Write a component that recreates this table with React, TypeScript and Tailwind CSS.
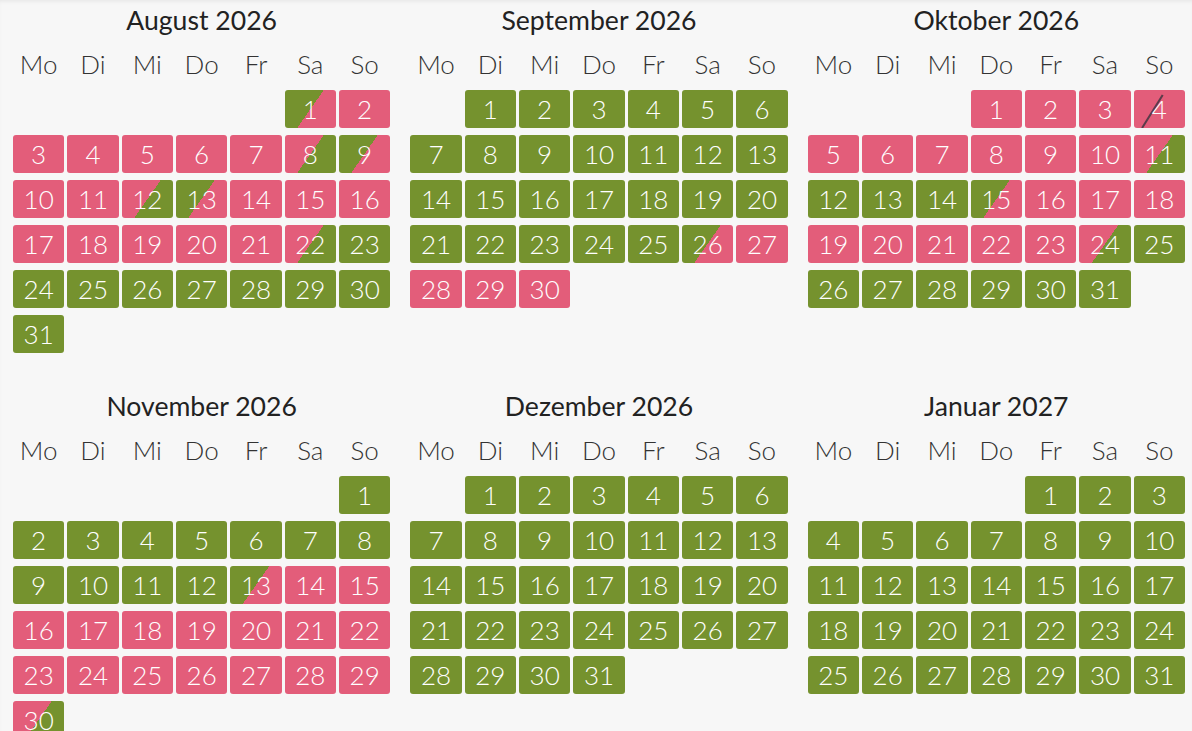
import React from "react";

// g = frei, p = belegt, a = Anreise (frei -> belegt), d = Abreise (belegt -> frei), x = belegt mit Wechselstrich
type DayState = "g" | "p" | "a" | "d" | "x";

interface MonthData {
  name: string;
  offset: number;
  days: string;
}

const months: MonthData[] = [
  { name: "August 2026", offset: 5, days: "a" + "pppppp" + "d" + "a" + "pp" + "d" + "a" + "pppppppp" + "d" + "ggggggggg" },
  { name: "September 2026", offset: 1, days: "g".repeat(25) + "a" + "pppp" },
  { name: "Oktober 2026", offset: 3, days: "ppp" + "x" + "pppppp" + "d" + "ggg" + "a" + "pppppppp" + "d" + "ggggggg" },
  { name: "November 2026", offset: 6, days: "g".repeat(12) + "a" + "p".repeat(16) + "d" },
  { name: "Dezember 2026", offset: 1, days: "g".repeat(31) },
  { name: "Januar 2027", offset: 4, days: "g".repeat(31) },
];

const weekdays = ["Mo", "Di", "Mi", "Do", "Fr", "Sa", "So"];

const stateClasses: Record<DayState, string> = {
  g: "bg-[#75922e]",
  p: "bg-[#e35d7a]",
  x: "bg-[#e35d7a]",
  a: "bg-[linear-gradient(125deg,#75922e_50%,#e35d7a_50%)]",
  d: "bg-[linear-gradient(125deg,#e35d7a_50%,#75922e_50%)]",
};

function DayCell({ day, state }: { day: number; state: DayState }) {
  return (
    <div
      className={`relative h-[38px] rounded-[3px] text-center text-[26px] font-light leading-[38px] text-white ${stateClasses[state]}`}
    >
      {state === "x" && (
        <svg className="absolute inset-0 h-full w-full" viewBox="0 0 51 38" preserveAspectRatio="none">
          <line x1="28.5" y1="5" x2="8" y2="38" stroke="#5b3c4a" strokeWidth="2" />
        </svg>
      )}
      <span className="relative">{day}</span>
    </div>
  );
}

function Month({ month }: { month: MonthData }) {
  return (
    <div className="pl-[13px] pr-[7px] pb-[33px]">
      <h2 className="pt-[5px] text-center text-[26.6px] leading-[30px] text-[#222]">{month.name}</h2>
      <div className="mt-[14px] grid grid-cols-7 gap-x-[3px] text-center text-[26px] font-light leading-[31px] text-[#333]">
        {weekdays.map((w) => (
          <div key={w}>{w}</div>
        ))}
      </div>
      <div className="mt-[10px] grid grid-cols-7 gap-x-[3px] gap-y-[7px]">
        {Array.from({ length: month.offset }).map((_, i) => (
          <div key={`e${i}`} />
        ))}
        {month.days.split("").map((s, i) => (
          <DayCell key={i} day={i + 1} state={s as DayState} />
        ))}
      </div>
    </div>
  );
}

export default function App() {
  return (
    <div className="min-h-screen bg-[#f7f7f7] font-['Lato','Noto_Sans',sans-serif] shadow-[inset_0_3px_4px_-2px_rgba(0,0,0,0.08)]">
      <div className="grid grid-cols-3">
        {months.map((m) => (
          <Month key={m.name} month={m} />
        ))}
      </div>
    </div>
  );
}
